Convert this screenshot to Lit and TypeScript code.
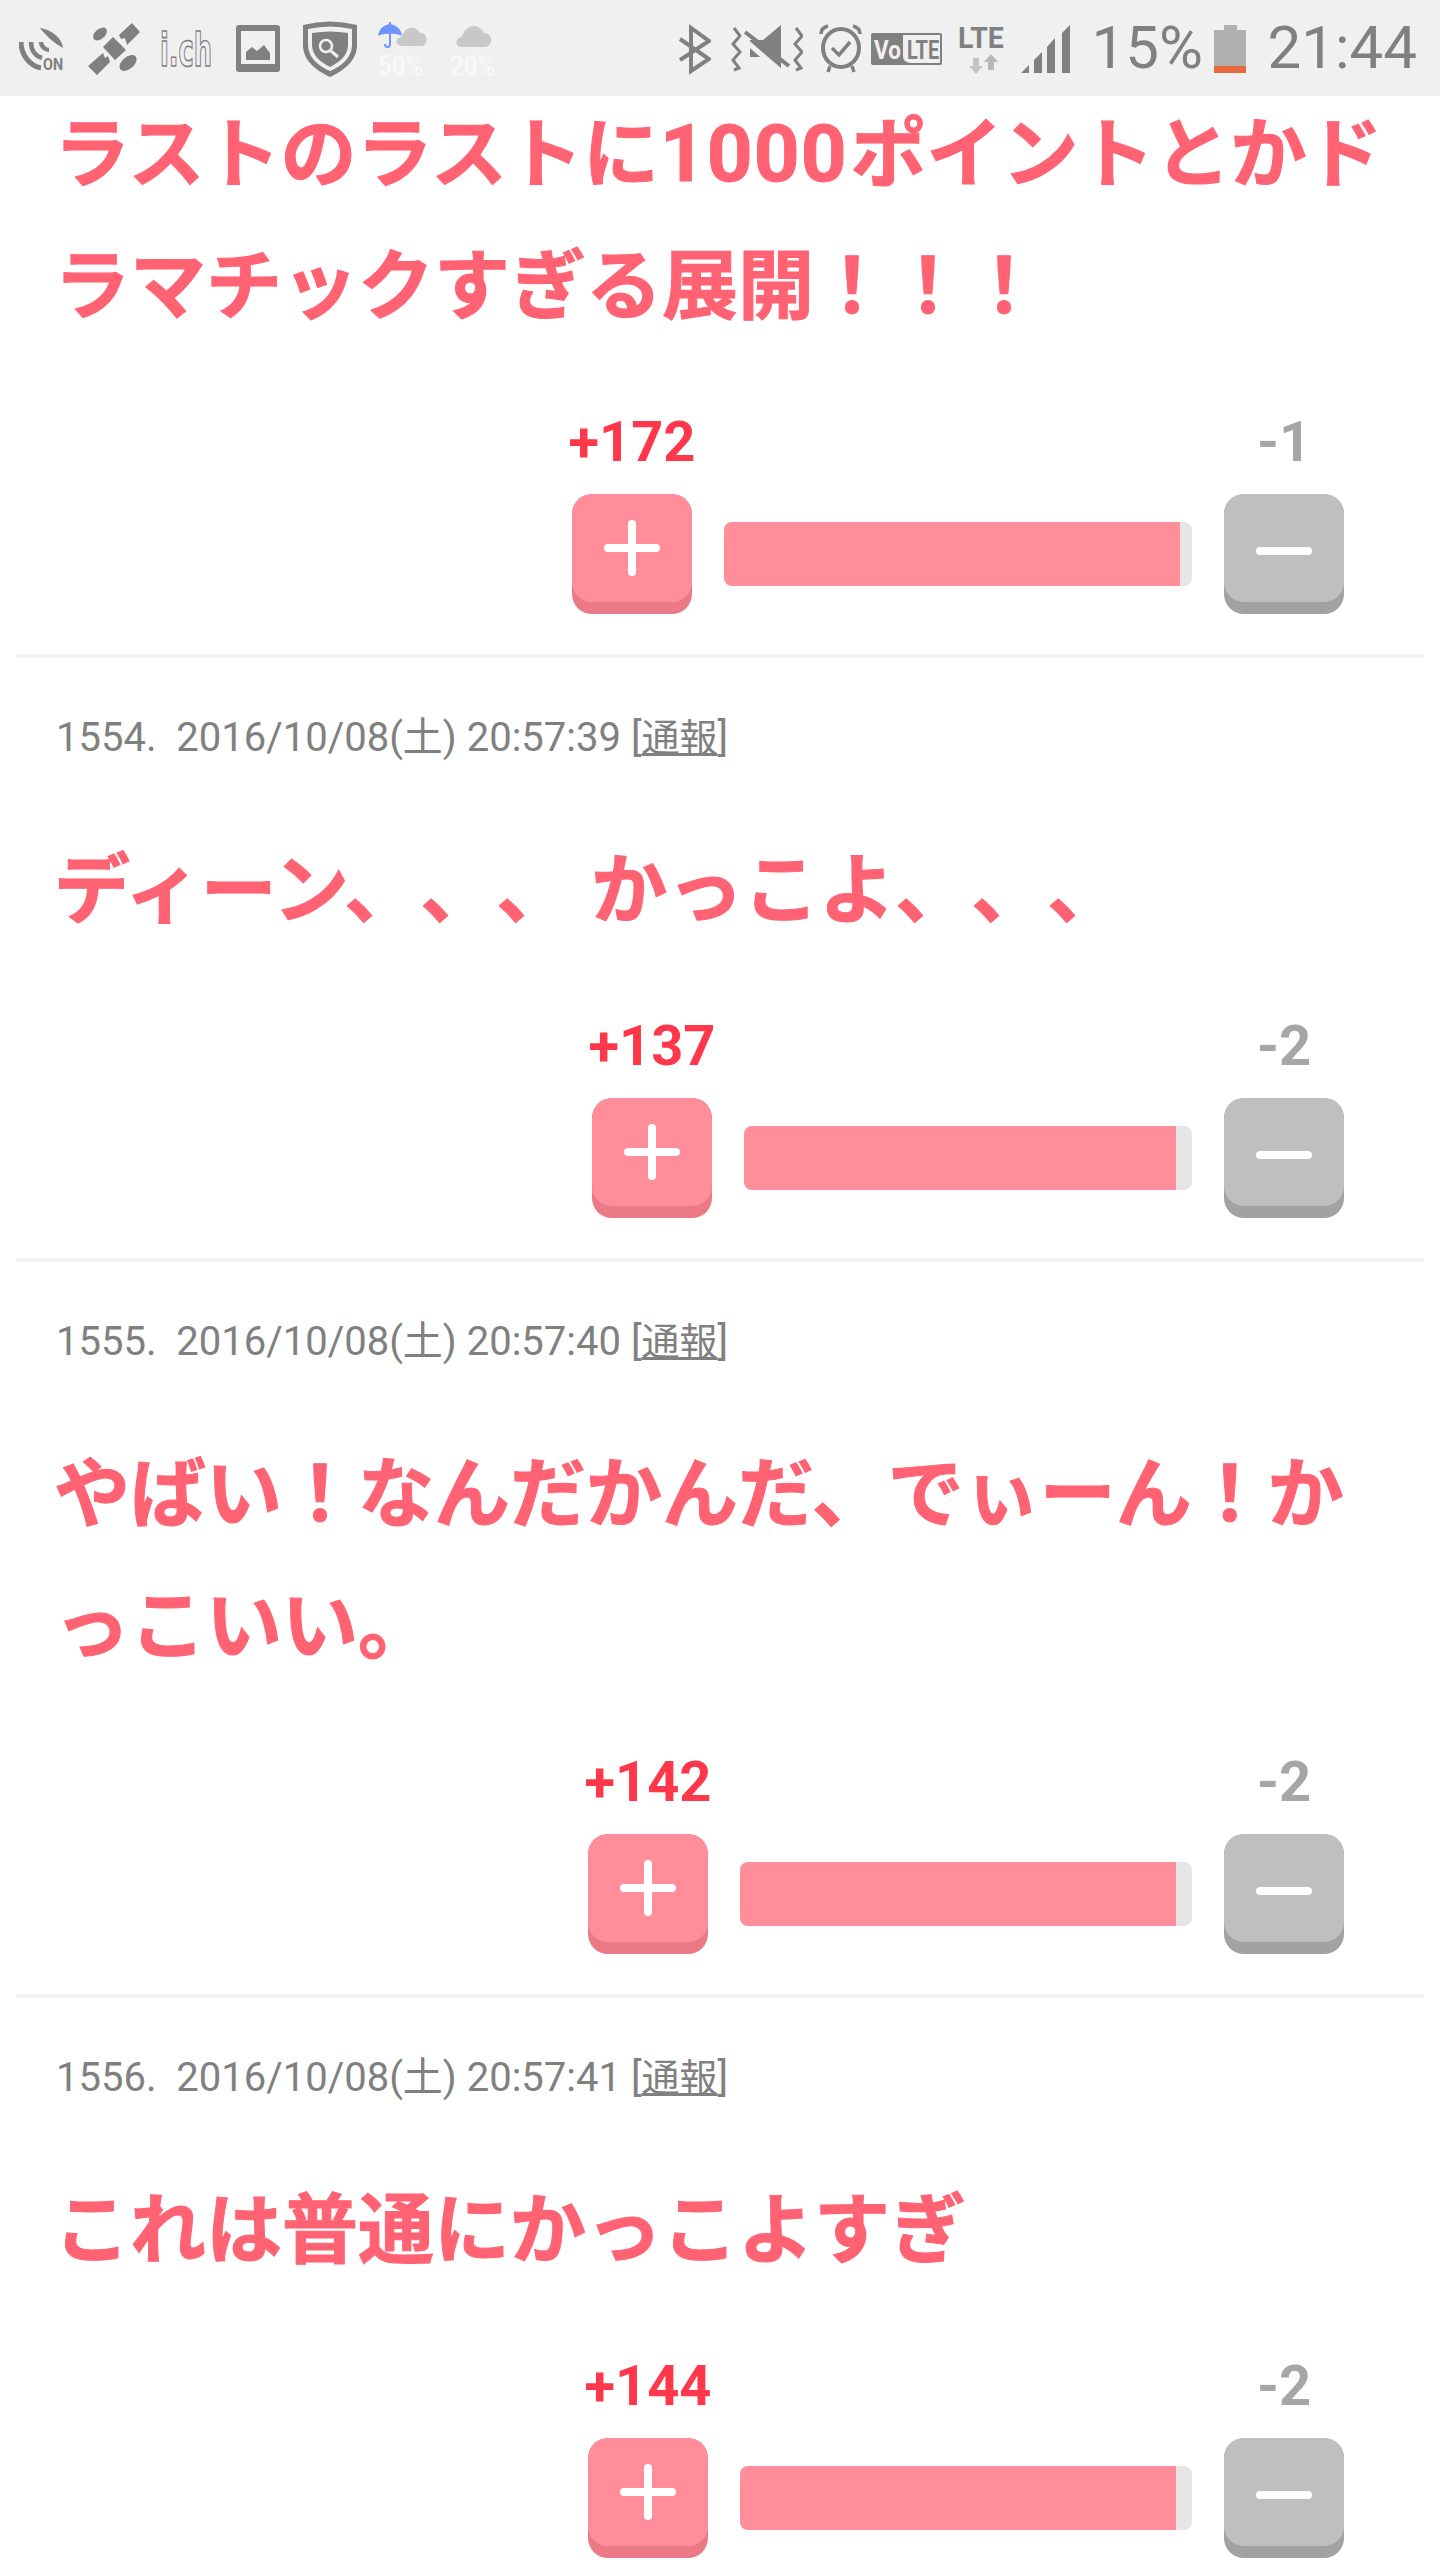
import { LitElement, html, css } from 'lit';
import { customElement } from 'lit/decorators.js';

type Comment = {
  meta?: string;
  text: string;
  up: string;
  down: string;
  barWidth: number;
  fillWidth: number;
};

const comments: Comment[] = [
  {
    text: 'ラストのラストに1000ポイントとかド\nラマチックすぎる展開！！！',
    up: '+172',
    down: '-1',
    barWidth: 468,
    fillWidth: 456,
  },
  {
    meta: '1554.\u00a0 2016/10/08(土) 20:57:39',
    text: 'ディーン、、、 かっこよ、、、',
    up: '+137',
    down: '-2',
    barWidth: 448,
    fillWidth: 432,
  },
  {
    meta: '1555.\u00a0 2016/10/08(土) 20:57:40',
    text: 'やばい！なんだかんだ、でぃーん！か\nっこいい。',
    up: '+142',
    down: '-2',
    barWidth: 452,
    fillWidth: 436,
  },
  {
    meta: '1556.\u00a0 2016/10/08(土) 20:57:41',
    text: 'これは普通にかっこよすぎ',
    up: '+144',
    down: '-2',
    barWidth: 452,
    fillWidth: 436,
  },
];

@customElement('status-bar')
export class StatusBar extends LitElement {
  static styles = css`
    :host {
      display: flex;
      position: relative;
      z-index: 1;
      height: 96px;
      background: #f0f0f0;
      justify-content: space-between;
      font-family: Roboto, sans-serif;
      color: #808080;
    }
    .left,
    .right {
      display: flex;
      align-items: flex-start;
      height: 96px;
    }
    .left {
      padding-left: 19px;
    }
    .right {
      padding-right: 23px;
    }
    svg {
      display: block;
      height: 96px;
      flex: none;
    }
    svg text {
      font-family: Roboto, sans-serif;
    }
    .readout {
      font-size: 60px;
      line-height: 96px;
      height: 96px;
      white-space: nowrap;
    }
    .pct {
      margin-left: 22px;
      width: 110px;
    }
    .clock {
      margin-left: 22px;
    }
    .ml12 {
      margin-left: 12px;
    }
    .ml9 {
      margin-left: 9px;
    }
    .ml16 {
      margin-left: 16px;
    }
    .ml20 {
      margin-left: 20px;
    }
    .ml23 {
      margin-left: 23px;
    }
    .ml24 {
      margin-left: 24px;
    }
  `;

  private renderLeft() {
    return html`
      <svg width="46" viewBox="19 0 46 96" fill="none" stroke="#808080">
        <path d="M21 42C21 55 30 66 41 68" stroke-width="5" />
        <path d="M31 42C31 50 35 56 42 58" stroke-width="4.5" />
        <path d="M41 42C41 46 45 50 49 50" stroke-width="4.5" />
        <path d="M40 28C52 30 62 38 63 48C54 43 46 36 40 28Z" fill="#808080" stroke="none" />
        <text transform="translate(43 70) scale(.9 1.08)" font-size="16" font-weight="700" fill="#808080" stroke="none">ON</text>
      </svg>
      <svg class="ml23" width="52" viewBox="88 0 52 96" fill="#808080">
        <path d="M103 47L113 37L126 50L115 60Z" />
        <path d="M119 35L132 23L140 32L127 45L125 38L121 39Z" />
        <path d="M88 66L103 53L105 58L108 56L110 62L97 75Z" />
        <ellipse cx="100" cy="34" rx="8" ry="5" transform="rotate(-40 100 34)" />
        <ellipse cx="128" cy="63" rx="10" ry="6" transform="rotate(-40 128 63)" />
      </svg>
      <svg class="ml20" width="52" viewBox="160 0 52 96">
        <text transform="translate(160 66) scale(.56 1)" font-size="46" font-weight="700" fill="#f0f0f0" stroke="#808080" stroke-width="1.3" vector-effect="non-scaling-stroke" style="font-family:'DejaVu Sans',sans-serif">i.ch</text>
      </svg>
      <svg class="ml24" width="44" viewBox="236 0 44 96">
        <rect x="236" y="25" width="44" height="47" rx="3" fill="#808080" />
        <rect x="241" y="31" width="34" height="33" fill="#f0f0f0" />
        <path d="M246 60V52L252 47L257 51L264 45L270 53V60Z" fill="#808080" />
      </svg>
      <svg class="ml23" width="54" viewBox="303 0 54 96">
        <path d="M303 25Q330 18 357 25V45C357 60 345 70 330 77C315 70 303 60 303 45Z" fill="#808080" />
        <path d="M308 29Q330 24 352 29V45C352 57 342 66 330 71C318 66 308 57 308 45Z" fill="#f0f0f0" />
        <path d="M312 33Q330 30 348 33V45C348 55 340 62 330 67C320 62 312 55 312 45Z" fill="#808080" />
        <circle cx="326" cy="46" r="6" fill="none" stroke="#f0f0f0" stroke-width="2.5" />
        <path d="M331 51L338 57" stroke="#f0f0f0" stroke-width="3" />
      </svg>
      <svg class="ml20" width="122" viewBox="377 0 122 96">
        <path d="M378 36C379 28 384 25 390 24C396 25 401 28 402 36C398 33 382 33 378 36Z" fill="#6f94ff" />
        <path d="M390 22V44C390 48 385 48 385 44" fill="none" stroke="#6f94ff" stroke-width="2" />
        <path d="M403 46C394 46 395 37 402 37C403 29 414 23 420 33C428 32 429 46 421 46Z" fill="#c8c8c8" />
        <path d="M462 47C454 47 455 37 462 37C464 27 477 20 484 33C493 33 494 47 484 47Z" fill="#c8c8c8" />
        <text transform="translate(378 76) scale(.92 1.1)" font-size="26" font-weight="700" fill="#f8f8f8">50%</text>
        <text transform="translate(450 76) scale(.92 1.1)" font-size="26" font-weight="700" fill="#f8f8f8">20%</text>
      </svg>
    `;
  }

  private renderRight() {
    return html`
      <svg width="32" viewBox="681 0 32 96" fill="none" stroke="#808080" stroke-width="4">
        <path d="M682 39L711 59L693 71V28L711 41L682 60" />
      </svg>
      <svg class="ml20" width="72" viewBox="732 0 72 96">
        <path d="M735 28L741 36L734 44L741 52L734 60L740 68L735 70" fill="none" stroke="#808080" stroke-width="3" />
        <path d="M797 28L803 36L796 44L803 52L796 60L802 68L797 70" fill="none" stroke="#808080" stroke-width="3" />
        <path d="M751 40H764L782 25V73L763 57H751Z" fill="#808080" />
        <path d="M742 37L786 75" stroke="#f0f0f0" stroke-width="5" />
        <path d="M746 32L790 66" stroke="#808080" stroke-width="4" />
      </svg>
      <svg class="ml16" width="43" viewBox="820 0 43 96" fill="none" stroke="#808080">
        <ellipse cx="842" cy="48" rx="18" ry="19" stroke-width="4" />
        <path d="M833 48L840 55L851 42" stroke-width="3.5" />
        <path d="M822 34C822 30 825 27 829 26" stroke-width="3.5" />
        <path d="M861 34C861 30 858 27 854 26" stroke-width="3.5" />
        <path d="M831 66L829 72M853 66L855 72" stroke-width="3.5" />
      </svg>
      <svg class="ml9" width="71" viewBox="872 0 71 96">
        <rect x="872" y="33" width="71" height="32" rx="2" fill="#808080" />
        <path d="M904 35H941V63H912C907 63 904 60 904 56Z" fill="#f0f0f0" />
        <text transform="translate(875 59) scale(.9 1)" font-size="25" font-weight="700" fill="#f0f0f0">Vo</text>
        <text transform="translate(908 59) scale(.8 1)" font-size="25" font-weight="700" fill="#808080">LTE</text>
      </svg>
      <svg class="ml16" width="51" viewBox="959 0 51 96">
        <text transform="translate(959 48) scale(.98 1)" font-size="29" font-weight="700" fill="#808080">LTE</text>
        <path d="M974 58H980V66H984L977 74L970 66H974Z" fill="#c4c4c4" />
        <path d="M989 70H995V62H999L992 54L985 62H989Z" fill="#b8b8b8" />
      </svg>
      <svg class="ml12" width="49" viewBox="1022 0 49 96" fill="#808080">
        <path d="M1022 73L1030 65V73Z" />
        <path d="M1035 60L1043 52V73H1035Z" />
        <path d="M1048 47L1056 38V73H1048Z" />
        <path d="M1063 33L1071 25V73H1063Z" />
      </svg>
      <div class="readout pct">15%</div>
      <svg class="ml12" width="32" viewBox="1215 0 32 96">
        <path d="M1225 25H1238V30H1247V66H1215V30H1225Z" fill="#b0b0b0" />
        <rect x="1215" y="66" width="32" height="7" fill="#e8683f" />
      </svg>
      <div class="readout clock">21:44</div>
    `;
  }

  render() {
    return html`
      <div class="left">${this.renderLeft()}</div>
      <div class="right">${this.renderRight()}</div>
    `;
  }
}

@customElement('vote-bar')
export class VoteBar extends LitElement {
  static styles = css`
    :host {
      display: flex;
      justify-content: flex-end;
      padding-right: 40px;
      font-family: Roboto, 'Noto Sans CJK JP', sans-serif;
    }
    .col {
      display: flex;
      flex-direction: column;
      align-items: center;
      width: 120px;
    }
    .count {
      font-size: 56px;
      line-height: 56px;
      font-weight: 700;
      white-space: nowrap;
      margin-bottom: 24px;
    }
    .up .count {
      color: #ff374b;
    }
    .down .count {
      color: #a6a6a6;
    }
    .btn {
      width: 120px;
      height: 120px;
      border-radius: 20px;
      overflow: hidden;
    }
    .cap {
      height: 108px;
      border-radius: 20px;
      display: flex;
      align-items: center;
      justify-content: center;
    }
    .up .btn {
      background: #eb7a86;
    }
    .up .cap {
      background: #ff8e9a;
    }
    .down .btn {
      background: #a2a2a2;
    }
    .down .cap {
      background: #bfbfbf;
    }
    svg {
      display: block;
    }
    .track {
      align-self: flex-end;
      height: 64px;
      margin: 0 32px 28px;
      background: #e6e6e6;
      border-radius: 8px;
      overflow: hidden;
    }
    .fill {
      height: 100%;
      background: #ff8e9a;
    }
  `;

  static properties = {
    up: { type: String },
    down: { type: String },
    barWidth: { type: Number },
    fillWidth: { type: Number },
  };

  up = '';
  down = '';
  barWidth = 0;
  fillWidth = 0;

  render() {
    return html`
      <div class="col up">
        <div class="count">${this.up}</div>
        <div class="btn">
          <div class="cap">
            <svg width="60" height="60" viewBox="0 0 60 60" stroke="#fff" stroke-width="8" stroke-linecap="round">
              <path d="M6 30H54M30 6V54" />
            </svg>
          </div>
        </div>
      </div>
      <div class="track" style="width:${this.barWidth}px">
        <div class="fill" style="width:${this.fillWidth}px"></div>
      </div>
      <div class="col down">
        <div class="count">${this.down}</div>
        <div class="btn">
          <div class="cap">
            <svg width="60" height="60" viewBox="0 0 60 60" stroke="#fff" stroke-width="8" stroke-linecap="round">
              <path d="M6 33H54" />
            </svg>
          </div>
        </div>
      </div>
    `;
  }
}

@customElement('app-root')
export class AppRoot extends LitElement {
  static styles = css`
    :host {
      display: block;
      width: 1440px;
      height: 2560px;
      overflow: hidden;
      background: #fff;
      font-family: Roboto, 'Noto Sans CJK JP', sans-serif;
    }
    .feed {
      margin-top: -7px;
    }
    .comment {
      margin: 0 16px;
      padding: 0 40px 40px;
      border-bottom: 4px solid #f2f2f2;
    }
    .meta {
      padding-top: 56px;
      font-size: 40px;
      line-height: 48px;
      color: #808080;
      white-space: nowrap;
    }
    .meta a {
      color: inherit;
      font-size: 38px;
      text-decoration: underline;
      text-decoration-thickness: 3px;
    }
    .body {
      margin: 63px -28px 61px -2px;
      font-size: 76px;
      line-height: 132px;
      font-weight: 700;
      color: #ff6373;
      white-space: nowrap;
      text-spacing-trim: space-all;
      -webkit-text-stroke: 1px #ff6373;
    }
    .body .digits {
      font-size: 80px;
      line-height: 1;
      margin: 0 3px 0 1px;
      letter-spacing: 1px;
    }
    .comment.first .body {
      margin-top: 0;
    }
  `;

  // the digits sit a little larger than the kana around them
  private renderLine(line: string) {
    return line
      .split(/(\d+)/)
      .map((part) =>
        /^\d+$/.test(part) ? html`<span class="digits">${part}</span>` : part
      );
  }

  private renderComment(c: Comment) {
    return html`
      <div class="comment ${c.meta ? '' : 'first'}">
        ${c.meta ? html`<div class="meta">${c.meta} [<a>通報</a>]</div>` : ''}
        <div class="body" lang="ja">
          ${c.text.split('\n').map((line) => html`<div>${this.renderLine(line)}</div>`)}
        </div>
        <vote-bar
          .up=${c.up}
          .down=${c.down}
          .barWidth=${c.barWidth}
          .fillWidth=${c.fillWidth}
        ></vote-bar>
      </div>
    `;
  }

  render() {
    return html`
      <status-bar></status-bar>
      <div class="feed">${comments.map((c) => this.renderComment(c))}</div>
    `;
  }
}
